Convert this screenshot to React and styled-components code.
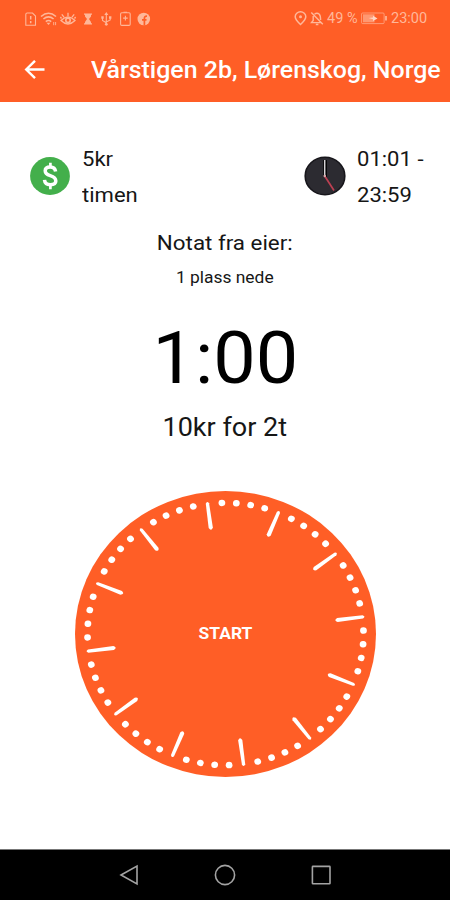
import React from 'react'
import styled, { createGlobalStyle } from 'styled-components'

const ORANGE = '#ff5e26'
const PALE = '#ffb799'

// the dial is turned a little counter clockwise
const OFFSET = -7.5

export default function App() {
  return (
    <>
      <GlobalStyle />
      <Screen>
        <Header>
          <StatusBar>
            <StatusIcons />
            <StatusRight>
              <PinIcon />
              <BellOffIcon />
              <StatusText $width={31}>49 %</StatusText>
              <BatteryIcon />
              <StatusText $width={37}>23:00</StatusText>
            </StatusRight>
          </StatusBar>
          <TitleBar>
            <BackButton aria-label="Tilbake">
              <svg width="22" height="20" viewBox="0 0 22 20" fill="none" stroke="#fff" strokeWidth="2.4">
                <path d="M20.5 9.5H2.5M11 0.8L2.2 9.5l8.8 8.7" />
              </svg>
            </BackButton>
            <Title>Vårstigen 2b, Lørenskog, Norge</Title>
          </TitleBar>
        </Header>
        <Content>
          <InfoRow>
            <Info>
              <DollarIcon />
              <InfoText>
                5kr
                <br />
                timen
              </InfoText>
            </Info>
            <Info>
              <ClockIcon />
              <InfoText>
                01:01 -
                <br />
                23:59
              </InfoText>
            </Info>
          </InfoRow>
          <Note>
            <Line $size={21} $height={36} $stretch={1.065}>Notat fra eier:</Line>
            <Line $size={16.5} $height={34} $stretch={1.055}>1 plass nede</Line>
          </Note>
          <Time>1:00</Time>
          <Line $size={25.5} $height={40} $stretch={1.06}>10kr for 2t</Line>
          <StartButton>
            <Dial />
            <StartLabel>START</StartLabel>
          </StartButton>
        </Content>
        <NavBar>
          <NavIcon>
            <path d="M3 11L19 2v18z" />
          </NavIcon>
          <NavIcon>
            <circle cx="11" cy="11" r="9.6" />
          </NavIcon>
          <NavIcon>
            <rect x="2.4" y="2.4" width="17.6" height="17.4" rx="0.6" />
          </NavIcon>
        </NavBar>
      </Screen>
    </>
  )
}

function Dial() {
  return (
    <DialSvg viewBox="-100 -100 200 200" preserveAspectRatio="none">
      <circle r="100" fill={ORANGE} />
      {Array.from({ length: 60 }, (_, i) => (
        <g key={i} transform={`rotate(${i * 6 + OFFSET})`} fill="#fff">
          {i % 5 === 0 ? (
            <path d="M-1.1 -92Q0 -94.2 1.1 -92L1.4 -75Q0 -72.2 -1.4 -75z" />
          ) : (
            <circle cy="-91.7" r="2.25" />
          )}
        </g>
      ))}
    </DialSvg>
  )
}

function StatusIcons() {
  return (
    <svg width="128" height="18" viewBox="0 0 128 18" fill="none" stroke={PALE} strokeWidth="1.1">
      {/* sim */}
      <path d="M2.2 3h5.3l3 3v9.3H.8V4.6Q.8 3 2.2 3z" />
      <path d="M5.7 6v3.5M5.7 11v2.2" strokeWidth="1.5" />
      {/* wifi */}
      <path d="M16 6.5Q23.5 0 31 6.5M18.4 9Q23.5 4.8 28.6 9M20.8 11.6Q23.5 9.4 26.2 11.6" strokeWidth="1.6" />
      <path d="M23.5 15l-2-2.2h4z" fill={PALE} stroke="none" />
      <path d="M28.7 12v3.2M30.6 12v3.2" strokeWidth="0.9" />
      {/* eye */}
      <path d="M36 10.5Q43 3.5 50 10.5Q43 17.5 36 10.5zM43 6V2.8M39 7.2L36.8 4.3M47 7.2l2.2-2.9M36.5 8.5L35.4 7M49.5 8.5l1.1-1.5" strokeWidth="1.3" />
      <circle cx="43" cy="10.3" r="2.2" strokeWidth="1.6" />
      {/* hourglass */}
      <path d="M60 4h6v2.6L64 9l2 2.9v2.2h-6v-2.2L62 9l-2-2.4z" fill={PALE} stroke="none" />
      <path d="M59 4.1h8M59 13.9h8" strokeWidth="1.3" />
      {/* usb */}
      <path d="M81.3 4v10M77.5 7.5v3l3.8 2.3M85.2 7.5V10l-3.9 2" />
      <path d="M81.3 2l2 3h-4zM76.3 6.3h2.4v2.4h-2.4zM84 6.3h2.4v2.4H84z" fill={PALE} stroke="none" />
      <circle cx="81.3" cy="14.3" r="1.4" fill={PALE} stroke="none" />
      {/* battery saver */}
      <rect x="95.6" y="2.8" width="9.6" height="12.6" rx="1.2" />
      <path d="M98.5 2.2h3.6M100.4 5.8v4.6M98.1 8.1h4.6" />
      {/* facebook */}
      <circle cx="118.8" cy="9" r="6.3" fill={PALE} stroke="none" />
      <path d="M119.4 15.3V8.3Q119.4 6 122 6.2M117 9.8h4.5" stroke={ORANGE} strokeWidth="1.7" />
    </svg>
  )
}

function PinIcon() {
  return (
    <svg width="13" height="15" viewBox="0 0 13 15" fill="none" stroke={PALE} strokeWidth="1.5">
      <path d="M6.5 13.5Q1.2 8.6 1.2 5.8a5.3 5 0 0 1 10.6 0Q11.8 8.6 6.5 13.5z" />
      <circle cx="6.5" cy="5.8" r="1.5" fill={PALE} stroke="none" />
    </svg>
  )
}

function BellOffIcon() {
  return (
    <svg width="14" height="15" viewBox="0 0 14 15" fill="none" stroke={PALE} strokeWidth="1.4">
      <path d="M4.5 3.2Q7 1.2 9.3 3.2Q10.6 4.6 10.6 9M3.2 5v4.5L1.5 11.6h9.2M5.8 13.5h2.6M1.3 1.5l11.5 11.7" />
    </svg>
  )
}

function BatteryIcon() {
  return (
    <svg width="27" height="13" viewBox="0 0 27 13">
      <rect x="0.6" y="1" width="22.5" height="10.6" rx="1" fill="none" stroke={PALE} strokeWidth="0.9" opacity="0.75" />
      <rect x="2" y="2.3" width="11.5" height="8" fill={PALE} opacity="0.65" />
      <path d="M7.5 6l4.5-0.6V3.8l4.5 2.6L12 9V7.2z" fill="#ffd5c4" />
      <path d="M25 4v4.6" stroke={PALE} strokeWidth="1.7" />
    </svg>
  )
}

function DollarIcon() {
  return (
    <svg width="42" height="40" viewBox="0 0 42 40">
      <ellipse cx="21" cy="20" rx="19.9" ry="18.9" fill="#43af4b" />
      <g fill="none" stroke="#fff" strokeWidth="3.5">
        <path d="M26.6 15.5Q26 11 21.2 11Q16.2 11 16.2 14.8Q16.2 18.2 21.2 19.6Q26.8 21.2 26.8 25Q26.8 28.7 21.4 28.7Q15.9 28.7 15.5 23.9" />
        <path d="M21.4 6.8v4M21.4 29v4.3" strokeWidth="2.7" />
      </g>
    </svg>
  )
}

function ClockIcon() {
  return (
    <svg width="42" height="40" viewBox="0 0 42 40">
      <ellipse cx="21" cy="20" rx="19.8" ry="18.8" fill="#2c2b31" stroke="#17161b" strokeWidth="1.6" />
      <path d="M21 21V4" stroke="#050507" strokeWidth="4" />
      <path d="M20.7 20.5V4" stroke="#d5d2d5" strokeWidth="1.5" />
      <path d="M20.7 20L30 34.5" stroke="#bd4052" strokeWidth="1.7" />
      <circle cx="20.7" cy="20" r="1.3" fill="#d8a9ad" />
    </svg>
  )
}

const GlobalStyle = createGlobalStyle`
  body {
    margin: 0;
    background: #fff;
    font-family: Roboto, 'Liberation Sans', sans-serif;
  }
  svg {
    display: block;
    flex: none;
  }
`

const Screen = styled.div`
  width: 450px;
  height: 900px;
  display: flex;
  flex-direction: column;
  overflow: hidden;
  background: #fff;
`

const Header = styled.header`
  height: 102px;
  background: ${ORANGE};
`

const StatusBar = styled.div`
  height: 37px;
  padding: 0 22px 0 25px;
  display: flex;
  align-items: center;
  justify-content: space-between;
`

const StatusRight = styled.div`
  display: flex;
  align-items: center;
  gap: 3px;
`

const StatusText = styled.span`
  width: ${(p) => p.$width}px;
  font-size: 14.5px;
  line-height: 18px;
  white-space: nowrap;
  color: ${PALE};
`

const TitleBar = styled.div`
  height: 65px;
  display: flex;
  align-items: center;
`

const BackButton = styled.button`
  padding: 0;
  margin: 0 44.5px 0 24px;
  border: 0;
  background: none;
`

const Title = styled.h1`
  margin: 0;
  font-size: 24px;
  font-weight: 500;
  line-height: 30px;
  white-space: nowrap;
  color: #fff;
  transform: scaleX(1.038);
  transform-origin: left;
`

const Content = styled.main`
  flex: 1;
  display: flex;
  flex-direction: column;
  align-items: center;
  padding-top: 39px;
`

const InfoRow = styled.div`
  align-self: stretch;
  display: flex;
  justify-content: space-between;
  padding: 0 30px 0 29px;
`

const Info = styled.div`
  display: flex;
  gap: 11px;

  svg {
    margin-top: 15px;
  }
`

const InfoText = styled.div`
  font-size: 21px;
  line-height: 36px;
  white-space: nowrap;
  color: #161616;
  transform: scaleX(1.05);
  transform-origin: left;
`

const Note = styled.div`
  margin-top: 12px;
  text-align: center;
`

const Line = styled.div`
  font-size: ${(p) => p.$size}px;
  line-height: ${(p) => p.$height}px;
  color: #161616;
  transform: scaleX(${(p) => p.$stretch});
`

const Time = styled.div`
  margin: 14px 0 -2px;
  font-size: 72px;
  line-height: 100px;
  color: #000;
  transform: scaleX(1.05);
`

const StartButton = styled.button`
  display: grid;
  place-items: center;
  margin-top: 44px;
  padding: 0;
  border: 0;
  background: none;
  font-family: inherit;

  > * {
    grid-area: 1 / 1;
  }
`

const DialSvg = styled.svg`
  width: 301px;
  height: 286px;
`

const StartLabel = styled.span`
  font-size: 16.5px;
  font-weight: 700;
  line-height: 20px;
  color: #fff;
  transform: scaleX(1.055);
`

const NavBar = styled.nav`
  height: 51px;
  box-sizing: border-box;
  border-top: 1px solid #777;
  display: flex;
  align-items: center;
  justify-content: center;
  gap: 74px;
  background: #000;
`

const NavIcon = styled.svg.attrs({ viewBox: '0 0 22 22' })`
  width: 22px;
  height: 22px;
  fill: none;
  stroke: #a3a3a3;
  stroke-width: 1.6;
`
